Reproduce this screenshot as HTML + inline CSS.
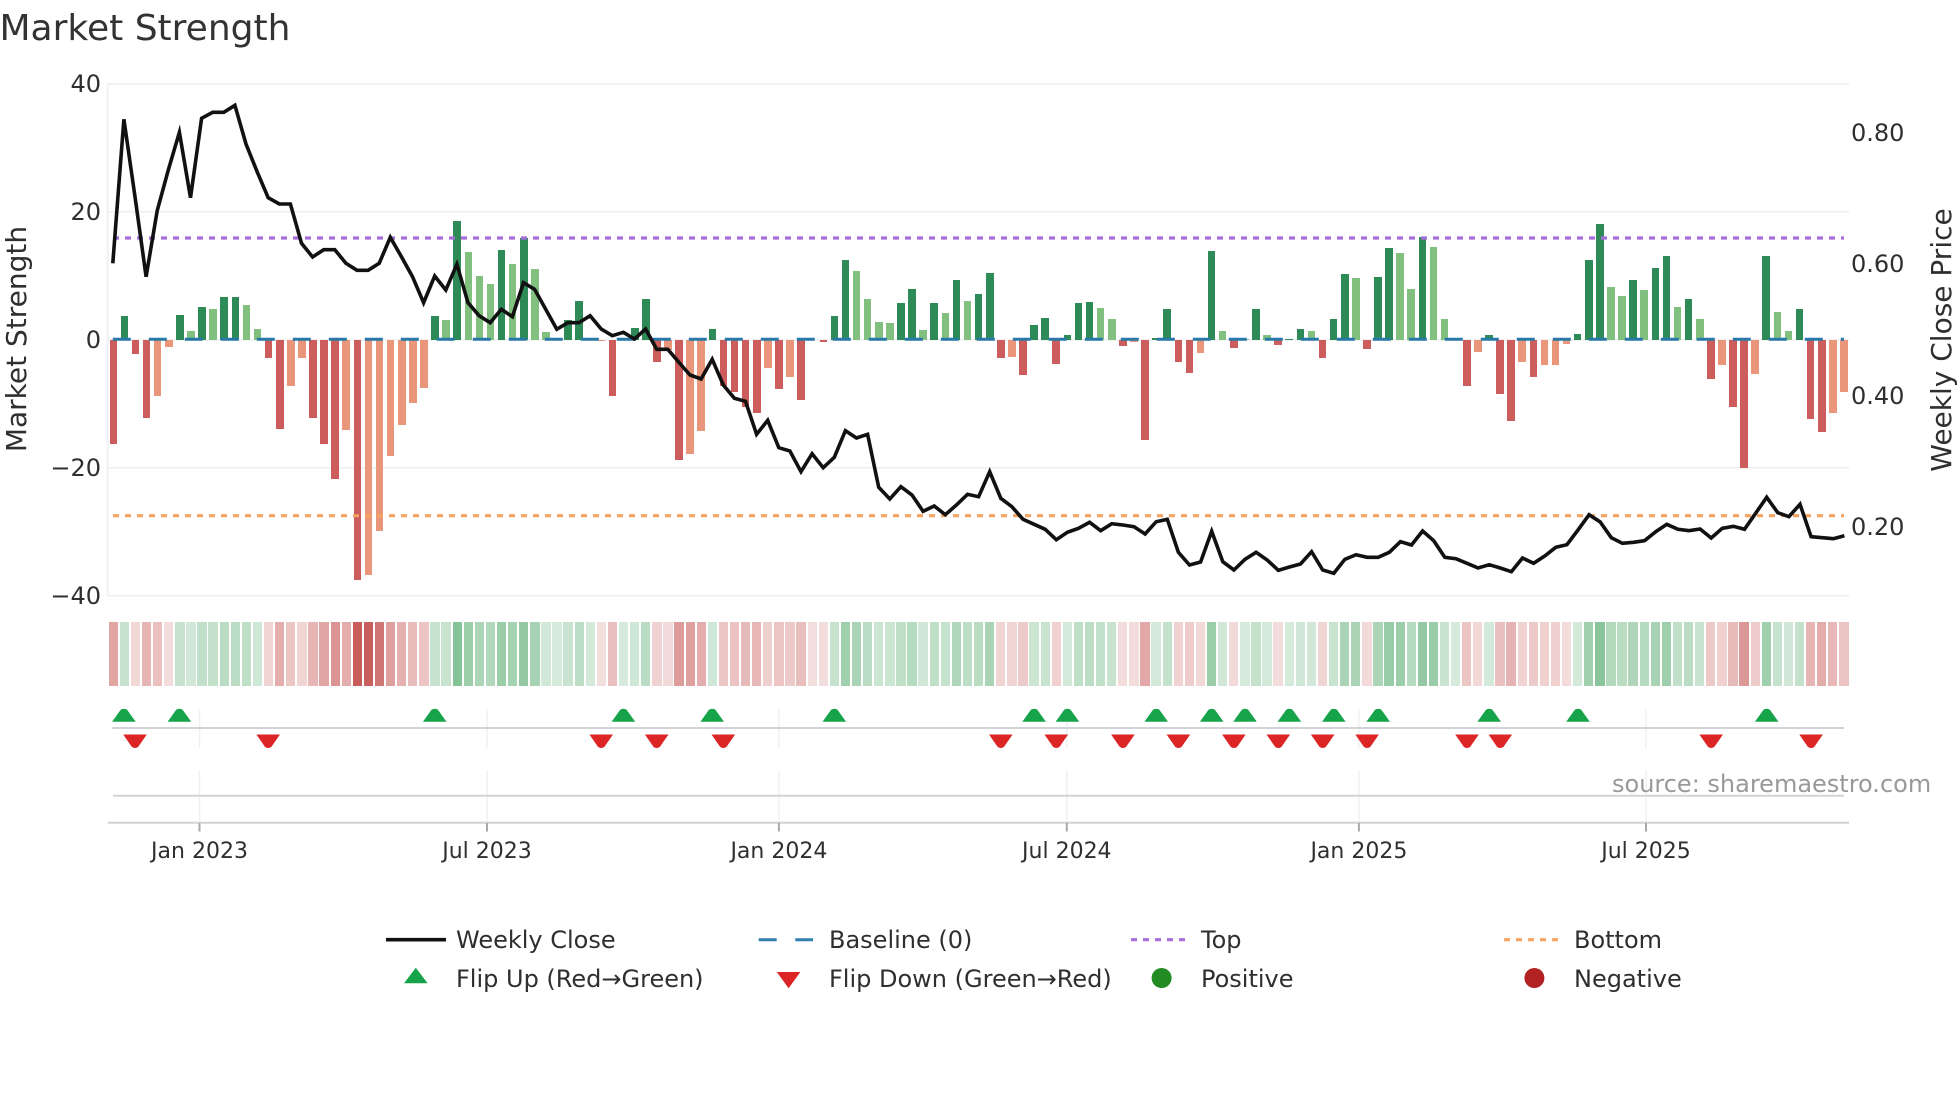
<!DOCTYPE html>
<html>
<head>
<meta charset="utf-8">
<title>Market Strength</title>
<style>
html,body{margin:0;padding:0;background:#fff;width:1960px;height:1102px;overflow:hidden}
svg{position:absolute;left:0;top:0}
text{font-family:"DejaVu Sans",sans-serif;fill:#2f2f2f}
.row{position:absolute;left:107.75px;display:flex;align-items:flex-start}
#bars{top:340px;height:0}
#bars i{display:block;flex:none;width:7.59375px;margin:0 1.75px}
#bars .g,#bars .l{transform:translateY(-100%)}
#bars .g{background:#2e8b57}
#bars .l{background:#81c07f}
#bars .r{background:#cd5c5c}
#bars .o{background:#e9967a}
#heat{top:622px;height:64px;opacity:.94}
#heat b{display:block;flex:none;width:9.3125px;margin:0 .890625px;height:64px}
#heat .g{background:#2a9448}
#heat .r{background:#c45250}
</style>
</head>
<body>
<svg width="1960" height="1102" viewBox="0 0 1960 1102">
<g stroke="#eff1f5" stroke-width="2" fill="none">
<path d="M107.7 84H1849M107.7 211.7H1849M107.7 339.7H1849M107.7 467.7H1849M107.7 595.7H1849M107.7 84V596"/>
</g>
</svg>
<div class="row" id="heat"><b class=r style=opacity:.55></b><b class=g style=opacity:.28></b><b class=r style=opacity:.25></b><b class=r style=opacity:.46></b><b class=r style=opacity:.39></b><b class=r style=opacity:.22></b><b class=g style=opacity:.28></b><b class=g style=opacity:.23></b><b class=g style=opacity:.31></b><b class=g style=opacity:.3></b><b class=g style=opacity:.34></b><b class=g style=opacity:.34></b><b class=g style=opacity:.32></b><b class=g style=opacity:.24></b><b class=r style=opacity:.26></b><b class=r style=opacity:.5></b><b class=r style=opacity:.35></b><b class=r style=opacity:.26></b><b class=r style=opacity:.46></b><b class=r style=opacity:.55></b><b class=r style=opacity:.66></b><b class=r style=opacity:.5></b><b class=r style=opacity:1></b><b class=r style=opacity:.98></b><b class=r style=opacity:.84></b><b class=r style=opacity:.59></b><b class=r style=opacity:.48></b><b class=r style=opacity:.41></b><b class=r style=opacity:.36></b><b class=g style=opacity:.28></b><b class=g style=opacity:.27></b><b class=g style=opacity:.6></b><b class=g style=opacity:.49></b><b class=g style=opacity:.41></b><b class=g style=opacity:.39></b><b class=g style=opacity:.5></b><b class=g style=opacity:.45></b><b class=g style=opacity:.54></b><b class=g style=opacity:.44></b><b class=g style=opacity:.23></b><b class=g style=opacity:.2></b><b class=g style=opacity:.27></b><b class=g style=opacity:.33></b><b class=g style=opacity:.21></b><b class=r style=opacity:.2></b><b class=r style=opacity:.39></b><b class=g style=opacity:.2></b><b class=g style=opacity:.24></b><b class=g style=opacity:.34></b><b class=r style=opacity:.27></b><b class=r style=opacity:.23></b><b class=r style=opacity:.6></b><b class=r style=opacity:.58></b><b class=r style=opacity:.5></b><b class=g style=opacity:.24></b><b class=r style=opacity:.35></b><b class=r style=opacity:.37></b><b class=r style=opacity:.42></b><b class=r style=opacity:.44></b><b class=r style=opacity:.29></b><b class=r style=opacity:.36></b><b class=r style=opacity:.32></b><b class=r style=opacity:.4></b><b class=r style=opacity:.2></b><b class=r style=opacity:.21></b><b class=g style=opacity:.28></b><b class=g style=opacity:.47></b><b class=g style=opacity:.43></b><b class=g style=opacity:.34></b><b class=g style=opacity:.26></b><b class=g style=opacity:.26></b><b class=g style=opacity:.32></b><b class=g style=opacity:.37></b><b class=g style=opacity:.23></b><b class=g style=opacity:.32></b><b class=g style=opacity:.29></b><b class=g style=opacity:.4></b><b class=g style=opacity:.33></b><b class=g style=opacity:.35></b><b class=g style=opacity:.42></b><b class=r style=opacity:.26></b><b class=r style=opacity:.26></b><b class=r style=opacity:.32></b><b class=g style=opacity:.25></b><b class=g style=opacity:.27></b><b class=r style=opacity:.28></b><b class=g style=opacity:.22></b><b class=g style=opacity:.32></b><b class=g style=opacity:.33></b><b class=g style=opacity:.31></b><b class=g style=opacity:.27></b><b class=r style=opacity:.22></b><b class=r style=opacity:.21></b><b class=r style=opacity:.53></b><b class=g style=opacity:.21></b><b class=g style=opacity:.3></b><b class=r style=opacity:.27></b><b class=r style=opacity:.31></b><b class=r style=opacity:.24></b><b class=g style=opacity:.5></b><b class=g style=opacity:.23></b><b class=r style=opacity:.23></b><b class=g style=opacity:.2></b><b class=g style=opacity:.3></b><b class=g style=opacity:.22></b><b class=r style=opacity:.22></b><b class=g style=opacity:.2></b><b class=g style=opacity:.24></b><b class=g style=opacity:.23></b><b class=r style=opacity:.26></b><b class=g style=opacity:.27></b><b class=g style=opacity:.42></b><b class=g style=opacity:.41></b><b class=r style=opacity:.23></b><b class=g style=opacity:.41></b><b class=g style=opacity:.51></b><b class=g style=opacity:.49></b><b class=g style=opacity:.37></b><b class=g style=opacity:.54></b><b class=g style=opacity:.51></b><b class=g style=opacity:.27></b><b class=g style=opacity:.2></b><b class=r style=opacity:.35></b><b class=r style=opacity:.24></b><b class=g style=opacity:.22></b><b class=r style=opacity:.38></b><b class=r style=opacity:.47></b><b class=r style=opacity:.27></b><b class=r style=opacity:.32></b><b class=r style=opacity:.28></b><b class=r style=opacity:.28></b><b class=r style=opacity:.21></b><b class=g style=opacity:.22></b><b class=g style=opacity:.47></b><b class=g style=opacity:.59></b><b class=g style=opacity:.38></b><b class=g style=opacity:.35></b><b class=g style=opacity:.4></b><b class=g style=opacity:.37></b><b class=g style=opacity:.44></b><b class=g style=opacity:.48></b><b class=g style=opacity:.31></b><b class=g style=opacity:.34></b><b class=g style=opacity:.27></b><b class=r style=opacity:.33></b><b class=r style=opacity:.28></b><b class=r style=opacity:.42></b><b class=r style=opacity:.63></b><b class=r style=opacity:.31></b><b class=g style=opacity:.48></b><b class=g style=opacity:.29></b><b class=g style=opacity:.23></b><b class=g style=opacity:.3></b><b class=r style=opacity:.46></b><b class=r style=opacity:.51></b><b class=r style=opacity:.44></b><b class=r style=opacity:.37></b></div>
<div class="row" id="bars"><i class=r style=height:104px></i><i class=g style=height:24px></i><i class=r style=height:14px></i><i class=r style=height:78px></i><i class=o style=height:56px></i><i class=o style=height:7px></i><i class=g style=height:25px></i><i class=l style=height:9px></i><i class=g style=height:33px></i><i class=l style=height:31px></i><i class=g style=height:43px></i><i class=g style=height:43px></i><i class=l style=height:35px></i><i class=l style=height:11px></i><i class=r style=height:18px></i><i class=r style=height:89px></i><i class=o style=height:46px></i><i class=o style=height:18px></i><i class=r style=height:78px></i><i class=r style=height:104px></i><i class=r style=height:139px></i><i class=o style=height:90px></i><i class=r style=height:240px></i><i class=o style=height:235px></i><i class=o style=height:191px></i><i class=o style=height:116px></i><i class=o style=height:85px></i><i class=o style=height:63px></i><i class=o style=height:48px></i><i class=g style=height:24px></i><i class=l style=height:20px></i><i class=g style=height:119px></i><i class=l style=height:88px></i><i class=l style=height:64px></i><i class=l style=height:56px></i><i class=g style=height:90px></i><i class=l style=height:76px></i><i class=g style=height:102px></i><i class=l style=height:71px></i><i class=l style=height:8px></i><i class=l style=height:0></i><i class=g style=height:20px></i><i class=g style=height:39px></i><i class=l style=height:2px></i><i class=o style=height:1px></i><i class=r style=height:56px></i><i class=l style=height:1px></i><i class=g style=height:12px></i><i class=g style=height:41px></i><i class=r style=height:22px></i><i class=o style=height:10px></i><i class=r style=height:120px></i><i class=o style=height:114px></i><i class=o style=height:91px></i><i class=g style=height:11px></i><i class=r style=height:46px></i><i class=r style=height:52px></i><i class=r style=height:67px></i><i class=r style=height:73px></i><i class=o style=height:28px></i><i class=r style=height:49px></i><i class=o style=height:37px></i><i class=r style=height:60px></i><i class=o style=height:0></i><i class=r style=height:2px></i><i class=g style=height:24px></i><i class=g style=height:80px></i><i class=l style=height:69px></i><i class=l style=height:41px></i><i class=l style=height:18px></i><i class=l style=height:17px></i><i class=g style=height:37px></i><i class=g style=height:51px></i><i class=l style=height:10px></i><i class=g style=height:37px></i><i class=l style=height:27px></i><i class=g style=height:60px></i><i class=l style=height:39px></i><i class=g style=height:46px></i><i class=g style=height:67px></i><i class=r style=height:18px></i><i class=o style=height:17px></i><i class=r style=height:35px></i><i class=g style=height:15px></i><i class=g style=height:22px></i><i class=r style=height:24px></i><i class=g style=height:5px></i><i class=g style=height:37px></i><i class=g style=height:38px></i><i class=l style=height:32px></i><i class=l style=height:21px></i><i class=r style=height:6px></i><i class=o style=height:2px></i><i class=r style=height:100px></i><i class=g style=height:2px></i><i class=g style=height:31px></i><i class=r style=height:22px></i><i class=r style=height:33px></i><i class=o style=height:13px></i><i class=g style=height:89px></i><i class=l style=height:9px></i><i class=r style=height:8px></i><i class=l style=height:1px></i><i class=g style=height:31px></i><i class=l style=height:5px></i><i class=r style=height:5px></i><i class=g style=height:1px></i><i class=g style=height:11px></i><i class=l style=height:9px></i><i class=r style=height:18px></i><i class=g style=height:21px></i><i class=g style=height:66px></i><i class=l style=height:62px></i><i class=r style=height:9px></i><i class=g style=height:63px></i><i class=g style=height:92px></i><i class=l style=height:87px></i><i class=l style=height:51px></i><i class=g style=height:103px></i><i class=l style=height:93px></i><i class=l style=height:21px></i><i class=l style=height:0></i><i class=r style=height:46px></i><i class=o style=height:12px></i><i class=g style=height:5px></i><i class=r style=height:54px></i><i class=r style=height:81px></i><i class=o style=height:22px></i><i class=r style=height:37px></i><i class=o style=height:25px></i><i class=o style=height:25px></i><i class=o style=height:4px></i><i class=g style=height:6px></i><i class=g style=height:80px></i><i class=g style=height:116px></i><i class=l style=height:53px></i><i class=l style=height:44px></i><i class=g style=height:60px></i><i class=l style=height:50px></i><i class=g style=height:72px></i><i class=g style=height:84px></i><i class=l style=height:33px></i><i class=g style=height:41px></i><i class=l style=height:21px></i><i class=r style=height:39px></i><i class=o style=height:25px></i><i class=r style=height:67px></i><i class=r style=height:128px></i><i class=o style=height:34px></i><i class=g style=height:84px></i><i class=l style=height:28px></i><i class=l style=height:9px></i><i class=g style=height:31px></i><i class=r style=height:79px></i><i class=r style=height:92px></i><i class=o style=height:73px></i><i class=o style=height:52px></i></div>
<svg width="1960" height="1102" viewBox="0 0 1960 1102">
<defs>
<path id="u" d="M-11.8 12.7L-3.2 .8Q0 -1.2 3.2 .8L11.8 12.7z" fill="#16a34a"/>
<path id="d" d="M-11.8 0L11.8 0L3.2 12.4Q0 14.6 -3.2 12.4z" fill="#dc2626"/>
</defs>
<!-- reference lines -->
<line x1="112.8" y1="339.2" x2="1844" y2="339.2" stroke="#2878a8" stroke-width="3" stroke-dasharray="18 18"/>
<line x1="113" y1="238" x2="1844" y2="238" stroke="#a66ddb" stroke-width="3.2" stroke-dasharray="6 6"/>
<line x1="113" y1="515.7" x2="1844" y2="515.7" stroke="#f4a460" stroke-width="3.2" stroke-dasharray="6 6"/>
<!-- weekly close -->
<g transform="translate(112.8 0) scale(11.1 1)">
<polyline fill="none" stroke="#111" stroke-width="3.6" stroke-linejoin="miter" stroke-miterlimit="6" vector-effect="non-scaling-stroke" points="0,263.3 1,119.3 2,196.7 3,276.7 4,210.7 5,170 6,132.3 7,197.7 8,118.3 9,112.3 10,112.3 11,105.3 12,144 13,171.7 14,197.7 15,204 16,204 17,243.3 18,257 19,249.7 20,249.7 21,263.3 22,270.3 23,270.3 24,263.3 25,237.3 26,256.7 27,276.7 28,302.7 29,276 30,290 31,264.3 32,302.7 33,315.7 34,322.7 35,309.3 36,316.7 37,282.7 38,289.3 39,309.3 40,329.3 41,322.7 42,322.7 43,315.7 44,329 45,335.7 46,332.3 47,339 48,329 49,349.3 50,349.3 51,362.3 52,375 53,379 54,359.3 55,385 56,398.3 57,401.3 58,434.3 59,420.3 60,447.7 61,451 62,471.7 63,453.7 64,467.7 65,457.3 66,430.7 67,438 68,434.3 69,487.3 70,499 71,486.7 72,495 73,511.3 74,506 75,514.7 76,505 77,494.3 78,496.7 79,471.7 80,498.3 81,506.7 82,519.3 83,524.3 84,529.3 85,539.7 86,532.3 87,528.3 88,522.3 89,530.7 90,523.7 91,525 92,526.7 93,534 94,521.7 95,519.3 96,552.3 97,565 98,562 99,531.3 100,561.7 101,570 102,559.3 103,552.3 104,560 105,570.3 106,567 107,564 108,551.7 109,570 110,573.3 111,559.3 112,554.7 113,557.3 114,557.3 115,552.3 116,541.7 117,545 118,531 119,540.7 120,557.3 121,558.7 122,563.3 123,568 124,564.7 125,568 126,571.7 127,558 128,563.3 129,556 130,547.3 131,544.7 132,530 133,514.7 134,522 135,537.7 136,543.3 137,542.3 138,540.7 139,531.7 140,524.3 141,529.3 142,530.7 143,529 144,538 145,528.3 146,526.3 147,529.3 148,513.3 149,497.3 150,512.7 151,516.7 152,504.3 153,536.7 154,537.7 155,538.7 156,535.7"/>
</g>
<!-- lower panels -->
<g stroke="#eef0f3" stroke-width="1.5" fill="none">
<path d="M199.5 709V748M487 709V748M778.9 709V748M1066.8 709V748M1358.9 709V748M1646 709V748"/>
<path d="M199.5 770V823M487 770V823M778.9 770V823M1066.8 770V823M1358.9 770V823M1646 770V823"/>
</g>
<g stroke="#d2d3d7" stroke-width="2" fill="none">
<path d="M112 728H1844M113 795.7H1844M107.7 822.7H1849"/>
</g>
<g stroke="#a9a9ad" stroke-width="2" fill="none">
<path d="M199.5 823V831.5M487 823V831.5M778.9 823V831.5M1066.8 823V831.5M1358.9 823V831.5M1646 823V831.5"/>
</g>
<!-- flip markers -->
<use href="#u" x="123.9" y="709"/><use href="#u" x="179.4" y="709"/><use href="#u" x="434.7" y="709"/><use href="#u" x="623.4" y="709"/><use href="#u" x="712.2" y="709"/><use href="#u" x="834.3" y="709"/><use href="#u" x="1034.1" y="709"/><use href="#u" x="1067.4" y="709"/><use href="#u" x="1156.2" y="709"/><use href="#u" x="1211.7" y="709"/><use href="#u" x="1245" y="709"/><use href="#u" x="1289.4" y="709"/><use href="#u" x="1333.8" y="709"/><use href="#u" x="1378.2" y="709"/><use href="#u" x="1489.2" y="709"/><use href="#u" x="1578" y="709"/><use href="#u" x="1766.7" y="709"/>
<use href="#d" x="135" y="734.5"/><use href="#d" x="268.2" y="734.5"/><use href="#d" x="601.2" y="734.5"/><use href="#d" x="656.7" y="734.5"/><use href="#d" x="723.3" y="734.5"/><use href="#d" x="1000.8" y="734.5"/><use href="#d" x="1056.3" y="734.5"/><use href="#d" x="1122.9" y="734.5"/><use href="#d" x="1178.4" y="734.5"/><use href="#d" x="1233.9" y="734.5"/><use href="#d" x="1278.3" y="734.5"/><use href="#d" x="1322.7" y="734.5"/><use href="#d" x="1367.1" y="734.5"/><use href="#d" x="1467" y="734.5"/><use href="#d" x="1500.3" y="734.5"/><use href="#d" x="1711.2" y="734.5"/><use href="#d" x="1811.1" y="734.5"/>
<!-- text -->
<text x="-.5" y="40" font-size="36" style="fill:#333">Market Strength</text>
<g font-size="24" text-anchor="end">
<text x="101" y="92">40</text>
<text x="101" y="220">20</text>
<text x="101" y="348">0</text>
<text x="101" y="476">−20</text>
<text x="101" y="604">−40</text>
</g>
<g font-size="24">
<text x="1851" y="141">0.80</text>
<text x="1851" y="272">0.60</text>
<text x="1851" y="404">0.40</text>
<text x="1851" y="535">0.20</text>
</g>
<text transform="translate(26 339) rotate(-90)" text-anchor="middle" font-size="28">Market Strength</text>
<text transform="translate(1951 340) rotate(-90)" text-anchor="middle" font-size="28">Weekly Close Price</text>
<g font-size="22" text-anchor="middle">
<text x="199.5" y="858">Jan 2023</text>
<text x="487" y="858">Jul 2023</text>
<text x="778.9" y="858">Jan 2024</text>
<text x="1066.8" y="858">Jul 2024</text>
<text x="1358.9" y="858">Jan 2025</text>
<text x="1646" y="858">Jul 2025</text>
</g>
<text x="1612" y="792" font-size="24" style="fill:#999">source: sharemaestro.com</text>
<!-- legend -->
<line x1="386" y1="939.7" x2="446" y2="939.7" stroke="#111" stroke-width="3.6"/>
<line x1="758.7" y1="939.7" x2="813" y2="939.7" stroke="#2f7fb0" stroke-width="3" stroke-dasharray="18 18.6"/>
<line x1="1131" y1="939.7" x2="1186" y2="939.7" stroke="#a66ddb" stroke-width="3.2" stroke-dasharray="6 6"/>
<line x1="1504" y1="939.7" x2="1559" y2="939.7" stroke="#f4a460" stroke-width="3.2" stroke-dasharray="6 6"/>
<path d="M404 983.3L415.8 967.7L427.6 983.3z" fill="#16a34a"/>
<path d="M776.8 972L800.4 972L788.6 988.3z" fill="#dc2626"/>
<circle cx="1161.6" cy="978" r="10" fill="#228b22"/>
<circle cx="1534.4" cy="978" r="10" fill="#b22222"/>
<g font-size="24">
<text x="456" y="948">Weekly Close</text>
<text x="829" y="948">Baseline (0)</text>
<text x="1201" y="948">Top</text>
<text x="1574" y="948">Bottom</text>
<text x="456" y="987">Flip Up (Red→Green)</text>
<text x="829" y="987">Flip Down (Green→Red)</text>
<text x="1201" y="987">Positive</text>
<text x="1574" y="987">Negative</text>
</g>
</svg>
</body>
</html>
